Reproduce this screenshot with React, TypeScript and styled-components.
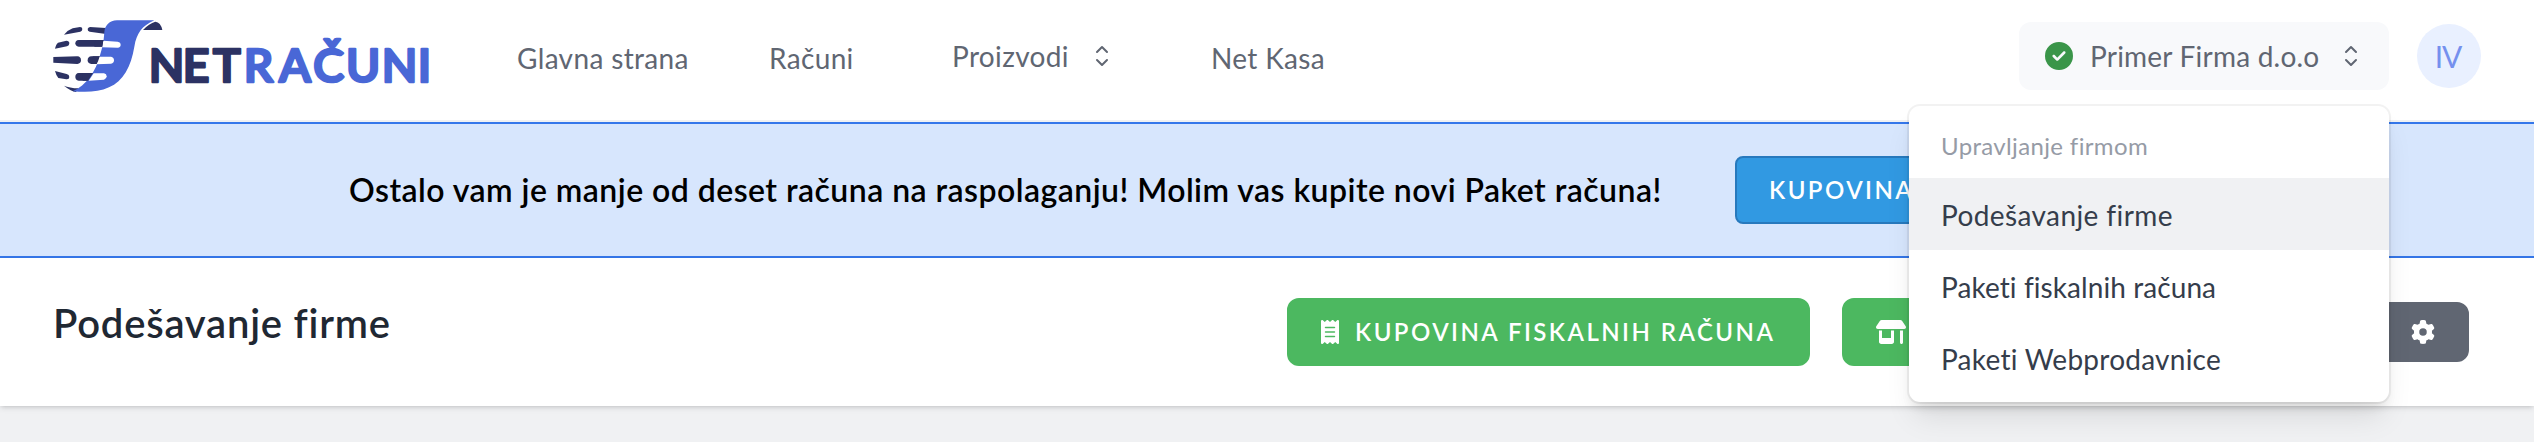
import React from 'react';
import styled, { createGlobalStyle } from 'styled-components';
import { FaCircleCheck, FaGear, FaReceipt, FaShop } from 'react-icons/fa6';

const Global = createGlobalStyle`
  * { box-sizing: border-box; }
  body {
    margin: 0;
    background: #f0f1f3;
    font-family: Lato, "Liberation Sans", sans-serif;
    font-variant-ligatures: none;
    overflow: hidden;
  }
`;

const Page = styled.div`
  height: 442px;
  overflow: hidden;
`;

const Header = styled.header`
  display: flex;
  align-items: flex-start;
  height: 122px;
  padding: 0 53px 0 46px;
  background: #fff;
  border-bottom: 2px solid #f0f1f3;
`;

const LogoSvg = styled.svg`
  width: 388px;
  height: 84px;
  margin-top: 12px;
  flex: none;
`;

const LogoText = styled.text`
  font-family: Lato, "Liberation Sans", sans-serif;
  font-size: 139px;
  font-weight: 600;
  stroke-width: 8px;
  stroke-linejoin: round;
`;

const Nav = styled.nav`
  display: flex;
  align-items: flex-start;
  margin-left: 83px;
`;

const NavItem = styled.a<{ $width: number; $raised?: boolean }>`
  display: flex;
  align-items: center;
  gap: 17px;
  width: ${p => p.$width}px;
  height: 40px;
  margin-top: ${p => (p.$raised ? 36 : 38)}px;
  line-height: 40px;
  font-size: 28px;
  letter-spacing: 0.35px;
  color: #606672;
  white-space: nowrap;
`;

const ChevronSvg = styled.svg`
  width: 32px;
  height: 32px;
  flex: none;
`;

const Account = styled.div`
  position: relative;
  display: flex;
  align-items: center;
  gap: 28px;
  margin: 22px 0 0 auto;
`;

const CompanyButton = styled.div`
  display: flex;
  align-items: center;
  width: 370px;
  height: 68px;
  padding: 0 22px 0 26px;
  border-radius: 12px;
  background: #f8f9fb;
  color: #606672;
  font-size: 28px;
  letter-spacing: 0.22px;
  white-space: nowrap;
`;

const CheckMark = styled(FaCircleCheck)`
  width: 28px;
  height: 28px;
  margin-right: 17px;
  color: #3a9549;
`;

const CompanyName = styled.span`
  flex: 1;
`;

const Avatar = styled.div`
  display: flex;
  align-items: center;
  justify-content: center;
  width: 64px;
  height: 64px;
  padding-right: 2px;
  border-radius: 50%;
  background: #e9f0ff;
  color: #7590ee;
  font-size: 30px;
  line-height: 64px;
  letter-spacing: -1px;
`;

const Menu = styled.div`
  position: absolute;
  z-index: 5;
  top: 84px;
  right: 92px;
  width: 480px;
  height: 296px;
  padding: 8px 0;
  border-radius: 11px;
  background: #fff;
  box-shadow: 0 0 0 2px rgba(0, 0, 0, 0.05), 0 20px 30px -6px rgba(0, 0, 0, 0.1),
    0 8px 12px -4px rgba(0, 0, 0, 0.1);
`;

const MenuLabel = styled.div`
  height: 64px;
  padding: 0 32px;
  line-height: 64px;
  font-size: 24px;
  letter-spacing: 0.35px;
  color: #969ba6;
`;

const MenuItem = styled.div<{ $active?: boolean; $tracking: number }>`
  height: 72px;
  padding: 0 32px;
  line-height: 74px;
  font-size: 28px;
  letter-spacing: ${p => p.$tracking}px;
  color: #353d4b;
  background: ${p => (p.$active ? '#f0f1f3' : 'transparent')};
`;

const Banner = styled.section`
  display: flex;
  align-items: center;
  height: 136px;
  padding-left: 349px;
  border: solid #3577ea;
  border-width: 2px 0;
  background: #d7e6fd;
`;

const BannerText = styled.p`
  width: 1386px;
  margin: 0;
  font-size: 32px;
  font-weight: 600;
  line-height: 40px;
  letter-spacing: 0.46px;
  color: #000;
  white-space: nowrap;
`;

const Button = styled.button<{ $width: number; $variant: 'blue' | 'green' | 'gray' }>`
  display: flex;
  align-items: center;
  flex: none;
  width: ${p => p.$width}px;
  height: ${p => (p.$variant === 'gray' ? 60 : 68)}px;
  padding: 0 32px;
  border: 2px solid ${p => ({ blue: '#2779bd', green: '#4cb860', gray: '#606672' })[p.$variant]};
  border-radius: ${p => (p.$variant === 'blue' ? 8 : 12)}px;
  background: ${p => ({ blue: '#3199e2', green: '#4cb860', gray: '#606672' })[p.$variant]};
  color: #fff;
  font: 600 24px/32px Lato, "Liberation Sans", sans-serif;
  letter-spacing: 2.45px;
  white-space: nowrap;

  svg {
    flex: none;
    height: 24px;
  }
`;

const ReceiptIcon = styled(FaReceipt)`
  width: 18px;
  margin-right: 16px;
`;

const ShopIcon = styled(FaShop)`
  width: 30px;
`;

const GearIcon = styled(FaGear)`
  width: 24px;
`;

const PageHeader = styled.section`
  display: flex;
  align-items: flex-start;
  justify-content: space-between;
  height: 148px;
  padding: 40px 65px 0 53px;
  background: #fff;
  box-shadow: 0 2px 6px rgba(0, 0, 0, 0.1), 0 2px 4px -2px rgba(0, 0, 0, 0.14);
`;

const Title = styled.h1`
  margin: 0;
  font-size: 40px;
  font-weight: 600;
  line-height: 50px;
  letter-spacing: 0.78px;
  color: #1f2833;
`;

const Actions = styled.div`
  display: flex;
  align-items: center;
  gap: 32px;
`;

function Chevrons() {
  return (
    <ChevronSvg viewBox="0 0 24 24" fill="none" stroke="#606672" strokeWidth="1.5" strokeLinecap="round" strokeLinejoin="round">
      <path d="M8.25 15 12 18.75 15.75 15m-7.5-6L12 5.25 15.75 9" />
    </ChevronSvg>
  );
}

function Logo() {
  return (
    <LogoSvg viewBox="0 0 1164 252">
      <g fill="#2c3263">
        <path d="M54 68Q66 54 80 49L102 45Q109 45 109 51Q109 57 103 59Z" />
        <path d="M132 45L180 48V66L131 59Q124 57 125 51Q126 46 132 45Z" />
        <path d="M27 110Q30 96 36 92L61 86Q70 86 70 94Q70 101 63 103Z" />
        <path d="M98 84H176V104H98Q88 103 88 94Q88 85 98 84Z" />
        <path d="M22 135L94 133Q105 134 105 145Q105 155 94 156L22 152Z" />
        <path d="M136 133H170V156H136Q125 155 125 145Q125 134 136 133Z" />
        <path d="M27 177L62 186Q70 188 70 195Q70 203 61 202L37 198Q31 192 27 177Z" />
        <path d="M98 183H160V206H98Q88 204 88 195Q88 184 98 183Z" />
        <path d="M54 221Q70 228 98 229L90 240Q76 239 54 221Z" />
        <path d="M291 54Q309 34 328 29Q344 30 349 54Z" />
      </g>
      <path fill="#4967d6" d="M213 25H325C287 42 272 64 265 104C255 164 232 207 189 226C157 241 121 241 80 238C121 221 150 177 162 130C170 104 173 90 175 60C177 40 190 26 213 25Z" />
      <g fill="#fff">
        <path d="M172 86L215 89Q224 91 224 98Q224 106 215 107L168 106Z" />
        <path d="M160 134H195Q204 136 204 145Q204 154 195 155L150 157Z" />
        <path d="M143 184L174 184Q182 186 182 193Q182 201 174 203L128 206Z" />
      </g>
      <path fill="#2c3263" d="M148 84H172L169 104H145ZM140 133H161Q157 148 152 156H138ZM110 183H141L126 206H110Z" />
      <LogoText y="209" x="308 410 501" fill="#2c3263" stroke="#2c3263">NET</LogoText>
      <LogoText y="209" x="593 699 802 900 1007 1115" fill="#4967d6" stroke="#4967d6">RAČUNI</LogoText>
    </LogoSvg>
  );
}

export default function App() {
  return (
    <Page>
      <Global />
      <Header>
        <Logo />
        <Nav>
          <NavItem $width={252}>Glavna strana</NavItem>
          <NavItem $width={183}>Računi</NavItem>
          <NavItem $width={259} $raised>Proizvodi<Chevrons /></NavItem>
          <NavItem $width={120}>Net Kasa</NavItem>
        </Nav>
        <Account>
          <CompanyButton>
            <CheckMark />
            <CompanyName>Primer Firma d.o.o</CompanyName>
            <Chevrons />
          </CompanyButton>
          <Avatar>IV</Avatar>
          <Menu>
            <MenuLabel>Upravljanje firmom</MenuLabel>
            <MenuItem $active $tracking={0.4}>Podešavanje firme</MenuItem>
            <MenuItem $tracking={0.08}>Paketi fiskalnih računa</MenuItem>
            <MenuItem $tracking={0.25}>Paketi Webprodavnice</MenuItem>
          </Menu>
        </Account>
      </Header>
      <Banner>
        <BannerText>Ostalo vam je manje od deset računa na raspolaganju! Molim vas kupite novi Paket računa!</BannerText>
        <Button $variant="blue" $width={420}>KUPOVINA</Button>
      </Banner>
      <PageHeader>
        <Title>Podešavanje firme</Title>
        <Actions>
          <Button $variant="green" $width={523}><ReceiptIcon preserveAspectRatio="none" />KUPOVINA FISKALNIH RAČUNA</Button>
          <Button $variant="green" $width={503}><ShopIcon /></Button>
          <Button $variant="gray" $width={92}><GearIcon /></Button>
        </Actions>
      </PageHeader>
    </Page>
  );
}
